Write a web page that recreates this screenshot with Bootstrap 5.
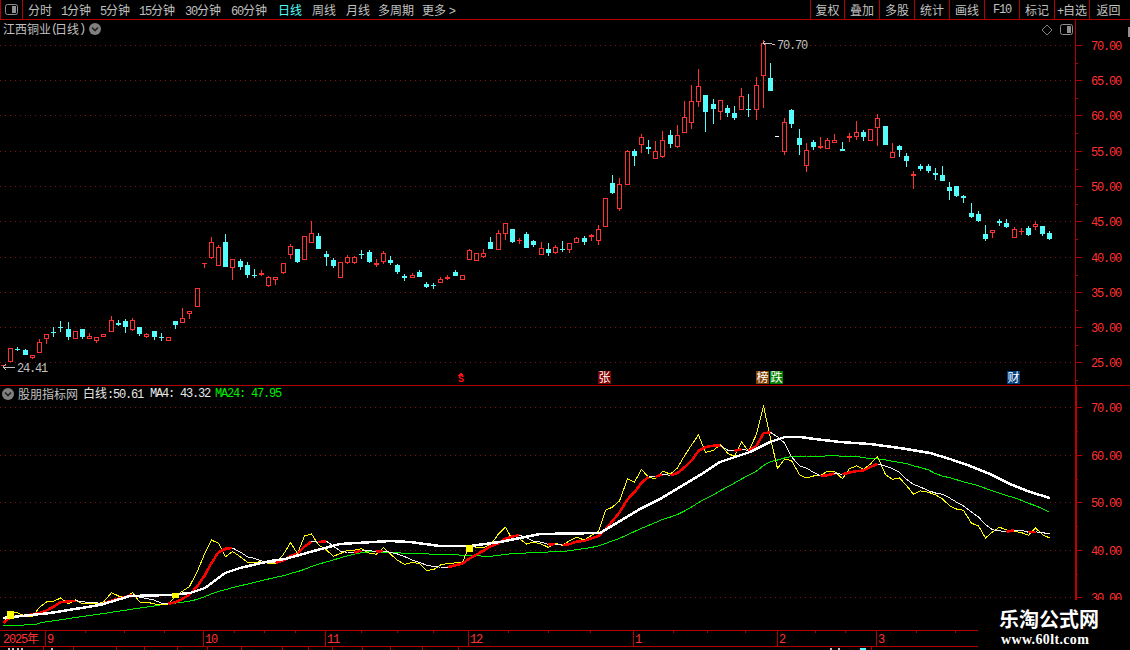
<!doctype html>
<html lang="zh">
<head>
<meta charset="utf-8">
<title>江西铜业(日线)</title>
<link href="https://cdn.jsdelivr.net/npm/bootstrap@5.3.0/dist/css/bootstrap.min.css" rel="stylesheet">
<style>
html,body{background:#000;margin:0;overflow:hidden}
body{font:12px/1 "Noto Sans CJK SC","Liberation Sans",sans-serif;color:#c0c0c0}
.stage{width:1130px;height:650px;background:#000;overflow:hidden}
.topbar{height:20px;border-bottom:1px solid #b40000;border-left:1px solid #b40000;line-height:19px}
.panel-btn{width:22px;border-right:1px solid #b40000}
.tb-left{display:grid;grid-template-columns:33px 39px 39px 46px 46px 47px 34px 34px 32px 44px auto;padding-left:5px}
.tb-on{color:#54fcfc}
.tb-btn{width:35px;border-left:1px solid #b40000;text-align:center}
.tb-btn:first-child{width:34px}
.tb-btn:last-child{width:41px;padding-right:3px}
.tb-f10{padding-top:1px}
.dg{font-family:"Liberation Mono",monospace;letter-spacing:-1.2px}
.pr{font-family:"Liberation Mono",monospace;letter-spacing:-3.2px}
.pane{display:block}
.pane-up{height:365px}
.pane-low{height:245px}
.legend{left:3px;top:3px;height:12px;line-height:12px}
.legend-low{left:2px;top:2px;height:14px;line-height:14px;gap:5px}
.chev{width:12px;height:12px}
.chev-title{margin-left:6px}
.chev-low{margin-right:-1px}
.lg-white{color:#e8e8e8}
.lg-ma4{margin-left:2px}
.lg-green{color:#00f000}
.ax-t{font:12px "Liberation Mono",monospace;letter-spacing:-1.2px;fill:#ff3232}
.lb-t{font:12px "Liberation Mono",monospace;letter-spacing:-1.2px;fill:#c0c0c0}
.mk-t{font:12px "Noto Sans CJK SC",sans-serif;fill:#fff}
.mk-s{font:bold 10px "Liberation Mono",monospace;fill:#ff1010}
.watermark{right:0;bottom:0;width:152px;height:50px;background:#000;color:#fff;padding-left:21px}
.wm-a{font:700 20px/22px "Noto Sans CJK SC",sans-serif;margin-top:8px}
.wm-b{font:bold 14px/14px "Liberation Serif",serif;padding-left:2px;letter-spacing:.35px;margin-top:3px}
</style>
</head>
<body>
<div class="stage d-flex flex-column position-relative">
  <nav class="topbar d-flex justify-content-between flex-shrink-0">
    <div class="d-flex">
      <div class="panel-btn d-flex align-items-center justify-content-center">
        <svg width="13" height="11" viewBox="0 0 13 11"><rect x=".5" y=".5" width="12" height="10" rx="2" fill="none" stroke="#909090"/><rect x="7" y="2" width="4" height="7" fill="#909090"/></svg>
      </div>
      <div class="tb-left">
        <span>分时</span><span><span class="dg">1</span>分钟</span><span><span class="dg">5</span>分钟</span><span><span class="dg">15</span>分钟</span><span><span class="dg">30</span>分钟</span><span><span class="dg">60</span>分钟</span><span class="tb-on">日线</span><span>周线</span><span>月线</span><span>多周期</span><span>更多 <span class="dg">&gt;</span></span>
      </div>
    </div>
    <div class="d-flex">
      <div class="tb-btn">复权</div><div class="tb-btn">叠加</div><div class="tb-btn">多股</div><div class="tb-btn">统计</div><div class="tb-btn">画线</div><div class="tb-btn dg tb-f10">F10</div><div class="tb-btn">标记</div><div class="tb-btn"><span class="dg">+</span>自选</div><div class="tb-btn">返回</div>
    </div>
  </nav>

  <section class="pane-up position-relative flex-shrink-0">
    <svg id="up" class="pane" width="1130" height="365" viewBox="0 20 1130 365" shape-rendering="crispEdges"></svg>
    <div class="legend position-absolute d-flex align-items-center">
      <span>江西铜业</span><span class="pr">(</span><span>日线</span><span class="pr">)</span>
      <svg class="chev chev-title" viewBox="0 0 12 12"><circle cx="6" cy="6" r="6" fill="#808080"/><path d="M3 4.5 6 7.5 9 4.5" fill="none" stroke="#222" stroke-width="1.6"/></svg>
    </div>
  </section>

  <section class="pane-low position-relative flex-shrink-0">
    <svg id="low" class="pane" width="1130" height="245" viewBox="0 385 1130 245" shape-rendering="crispEdges"></svg>
    <div class="legend-low position-absolute d-flex align-items-center">
      <svg class="chev chev-low" viewBox="0 0 12 12"><circle cx="6" cy="6" r="6" fill="#808080"/><path d="M3 4.5 6 7.5 9 4.5" fill="none" stroke="#222" stroke-width="1.6"/></svg>
      <span>股朋指标网</span>
      <span class="lg-white">白线<span class="dg">:50.61</span></span>
      <span class="lg-white dg lg-ma4">MA4: 43.32</span>
      <span class="lg-green dg">MA24: 47.95</span>
    </div>
  </section>

  <svg id="time" class="pane flex-shrink-0" width="1130" height="20" viewBox="0 630 1130 20" shape-rendering="crispEdges"></svg>

  <aside class="watermark position-absolute">
    <div class="wm-a">乐淘公式网</div>
    <div class="wm-b">www.60lt.com</div>
  </aside>
</div>

<script>
const R='#ff3232',K='#54fcfc',AX='#b40000',DOT='#7a1414';
const C=[
[3,'r',365,366],[10,'r',348,362],[17,'c',349,350,347,351],[25,'c',350,355,349,355],[32,'r',355,358,355,359],
[39,'r',342,353,339,353],[46,'r',334,339,334,344],[53,'c',332,333,327,337],[60,'c',327,328,321,332],[68,'c',329,337,322,340],
[75,'r',331,339],[82,'c',329,337,329,339],[89,'r',336,339,333,339],[96,'r',337,341,337,343],[103,'r',334,337],
[111,'r',320,332,316,332],[118,'c',323,325,320,326],[125,'c',321,327,319,333],[132,'r',320,330,318,331],[139,'c',327,334,327,336],
[146,'r',334,337,333,338],[154,'c',331,337,331,340],[161,'c',337,338,333,341],[168,'r',337,341],[175,'c',321,325,321,329],
[182,'r',318,323,308,323],[189,'r',311,314,311,319],[197,'r',288,307],[204,'r',263,264,263,268],[211,'r',242,258,237,259],
[218,'r',247,266,245,266],[225,'c',242,267,234,267],[232,'r',259,268,259,280],[240,'c',261,267,259,270],[247,'c',265,275,262,278],
[254,'c',275,276,269,278],[261,'r',273,275,270,276],[268,'r',277,286,276,287],[275,'r',277,280,277,285],[283,'r',263,273,263,274],
[290,'r',246,255,244,259],[297,'c',249,262,249,263],[304,'r',236,260],[311,'r',233,243,221,243],[318,'c',236,249,233,249],
[326,'c',254,257,251,266],[333,'c',260,266,258,268],[340,'r',262,278],[347,'r',257,263,255,264],[354,'r',257,263,256,264],
[361,'c',254,255,250,259],[369,'c',252,262,250,263],[376,'r',263,265,259,267],[383,'r',253,262,251,264],[390,'c',260,263,256,265],
[397,'c',265,272,264,274],[404,'c',276,278,274,281],[412,'r',275,278,273,278],[419,'c',272,277,270,277],[426,'c',284,287,282,288],
[433,'c',285,286,283,289],[440,'r',279,283,277,283],[447,'r',277,279,275,280],[455,'c',272,276,270,276],[462,'r',275,280],
[469,'r',250,260,249,260],[476,'r',253,261],[483,'r',253,257,249,258],[490,'c',242,249,237,249],[498,'r',233,250,230,250],
[505,'r',223,234,223,240],[512,'c',229,242,229,243],[519,'r',240,241,238,244],[526,'c',234,248,232,248],[533,'c',241,245,240,247],
[541,'r',248,255,242,255],[548,'c',249,253,243,256],[555,'r',247,253,245,254],[562,'c',249,250,241,252],[569,'r',243,250,243,253],
[576,'r',238,243,237,243],[584,'c',238,242,236,245],[591,'r',235,237,234,241],[598,'r',229,241,225,245],[605,'r',198,227],
[612,'c',183,193,175,194],[619,'r',184,209,178,211],[627,'r',151,185,150,185],[634,'c',151,156,149,166],[641,'r',137,145,134,153],
[648,'c',147,149,140,154],[655,'r',151,159,141,159],[662,'r',140,157,131,158],[670,'c',135,144,130,148],[677,'r',135,147,125,148],
[684,'r',117,133,101,133],[691,'r',101,123,85,129],[698,'r',86,102,69,107],[705,'c',95,112,95,132],[713,'c',104,109,99,124],
[720,'r',100,112,100,120],[727,'c',108,113,105,117],[734,'c',113,118,106,120],[741,'r',96,110,88,110],[748,'c',109,110,94,117],
[756,'r',85,110,77,120],[763,'r',43,76,40,108],[770,'c',78,91,63,91],[777,'w',136,137],[784,'r',122,152,118,155],
[791,'c',110,124,109,128],[799,'c',138,145,129,155],[806,'r',150,166,143,172],[813,'c',142,147,140,150],[820,'r',146,148,137,149],
[827,'r',140,149,138,149],[834,'r',140,143,134,143],[842,'c',149,151,142,151],[849,'r',136,138,133,142],[856,'r',132,137,121,140],
[863,'c',132,137,130,141],[870,'r',129,141],[877,'r',118,128,114,146],[885,'c',126,145],[892,'r',152,158,143,158],
[899,'c',146,150,145,157],[906,'c',156,161,153,167],[913,'r',174,176,171,189],[920,'c',166,169,164,171],[928,'c',166,171,164,173],
[935,'c',173,175,168,180],[942,'c',175,181,166,181],[949,'c',187,191,182,200],[956,'c',186,196,186,197],[963,'c',196,198,195,203],
[971,'c',213,217,203,218],[978,'c',214,221,211,222],[985,'c',234,239,225,241],[992,'r',230,233,230,238],[999,'c',221,223,219,226],
[1006,'c',223,227,219,228],[1014,'r',229,238,227,238],[1021,'r',231,232,228,235],[1028,'c',228,235,226,236],[1035,'r',224,227,221,230],
[1042,'c',226,234,226,236],[1049,'c',233,239,231,240]
];
const rect=(x,y,w,h,f)=>`<rect x="${x}" y="${y}" width="${w}" height="${h}" fill="${f}"/>`;
const grid=y=>`<line x1="0" y1="${y+.5}" x2="1075" y2="${y+.5}" stroke="${DOT}" stroke-dasharray="1 4"/>`;
const poly=(pts,col,w)=>`<polyline points="${pts.map(p=>p[0]+','+p[1].toFixed(1)).join(' ')}" fill="none" stroke="${col}" stroke-width="${w}" stroke-linejoin="round"/>`;

/* ---------- upper pane ---------- */
let u='';
const gy=[45,80,115,151,186,221,257,292,327,362],pr=['70.00','65.00','60.00','55.00','50.00','45.00','40.00','35.00','30.00','25.00'];
gy.forEach(y=>u+=grid(y));
u+=rect(1075,20,1,365,AX);
gy.forEach((y,i)=>{u+=rect(1075,y,7,1,AX);u+=rect(1075,y+18,3,1,AX);
  u+=`<text class="ax-t" x="1091" y="${y+5}">${pr[i]}</text>`;});
C.forEach(([x,c,t,b,h,l])=>{
  h=h===undefined?t:h;l=l===undefined?b:l;
  if(c==='w'){u+=rect(x-2,t,4,1,'#fff');return;}
  const col=c==='r'?R:K;
  if(l>h)u+=rect(x,h,1,l-h,col);
  if(c==='c'||b-t<=2){u+=rect(x-2,t,5,Math.max(b-t,1),col);}
  else{u+=rect(x-2,t,5,b-t,col)+rect(x-1,t+1,3,b-t-2,'#000');}
});
/* high / low annotations */
u+=`<path d="M763 43 765 41M763 43 765 45M763 43H769L775 45" fill="none" stroke="#c0c0c0"/><text class="lb-t" x="777" y="49">70.70</text>`;
u+=`<path d="M3 367H15M3 367 6 364M3 367 6 370" fill="none" stroke="#c0c0c0"/><text class="lb-t" x="17" y="372">24.41</text>`;
/* event markers */
u+=`<path d="M461 372.5 458.5 375.5H463.5Z" fill="#ff1010"/><text class="mk-s" x="458" y="382">S</text>`;
[[598,'#800000','张'],[756,'#804000','榜'],[770,'#008000','跌'],[1007,'#004080','财']].forEach(([x,f,s])=>{
  u+=rect(x,371,13,13,f)+`<text class="mk-t" x="${x+.5}" y="382">${s}</text>`;});
/* top-right icons */
u+=`<path d="M1047 25 1052 30 1047 35 1042 30Z" fill="none" stroke="#808080" shape-rendering="auto"/>`;
u+=`<rect x="1060.5" y="24.5" width="12" height="10" rx="2" fill="none" stroke="#909090" shape-rendering="auto"/>`+rect(1067,26,4,7,'#909090');
u+=rect(1128,27,2,10,'#909090');
document.getElementById('up').innerHTML=u;

/* ---------- lower pane ---------- */
const ly=uy=>407.3+(uy-45)*0.6738;
const cl=C.map(d=>[d[0]+.5,d[1]==='c'?d[3]:d[2]]);
const yellow=cl.map(p=>[p[0],ly(p[1])]);
const avg=(i,n)=>{let s=0,c=0;for(let k=Math.max(0,i-n+1);k<=i;k++){s+=cl[k][1];c++;}return s/c;};
const ma4=cl.map((p,i)=>[p[0],ly(avg(i,4))]);
const green=[[3,626],[35,624.5],[43,622.3],[100,614],[167,604]];
cl.forEach((p,i)=>{if(i>=24)green.push([p[0],ly(avg(i,24))]);});
const white=[[3,618],[50,613],[100,605],[130,596],[170,595],[190,593],[205,588],[225,573],[240,568],[270,561],[285,559],[310,552],[340,544],[390,541],[410,542],[440,546],[470,546],[500,542],[540,534],[600,533],[625,518],[640,509],[660,499],[680,487],[700,475],[720,462],[750,452],[770,442],[785,437],[800,437],[815,439],[840,442],[870,444],[900,448],[930,453],[950,459],[970,466],[990,474],[1010,484],[1030,492],[1050,498]];
let d=rect(0,385,1130,1,AX);
const ly2=[407,455,502,550,597],lp=['70.00','60.00','50.00','40.00','30.00'];
ly2.forEach(y=>d+=grid(y));
d+=rect(1075,386,2,244,'#c00000');
ly2.forEach((y,i)=>{d+=rect(1075,y,7,1,AX);if(i<4)d+=rect(1075,y+24,3,1,AX);
  d+=`<text class="ax-t" x="1091" y="${y+5}">${lp[i]}</text>`;});
d+=poly(green,'#00f000',1);
d+=poly(yellow,'#ffff00',1);
for(let i=1;i<ma4.length;i++){
  const rising=ma4[i][1]<ma4[i-1][1];
  d+=poly([ma4[i-1],ma4[i]],rising?'#ff0000':'#f0f0f0',rising?2.5:1);
}
d+=poly(white,'#ffffff',2.5);
d+=rect(7,611,7,8,'#ffff00')+rect(172,593,7,5,'#ffff00')+rect(466,545,7,7,'#ffff00');
document.getElementById('low').innerHTML=d;

/* ---------- time axis ---------- */
let t=rect(0,630,978,1,AX)+rect(0,646,978,1,AX);
[[45,'9'],[203,'10'],[325,'11'],[468,'12'],[633,'1'],[777,'2'],[876,'3']].forEach(([x,s])=>{
  t+=rect(x,630,1,16,AX)+`<text class="ax-t" x="${x+2}" y="643">${s}</text>`;});
[85,124,164,234,264,295,361,397,433,508,548,590,673,707,745,815,845,916,955].forEach(x=>t+=rect(x,630,1,3,AX));
t+=`<text class="ax-t" x="3" y="643">2025</text><text class="ax-t" x="27" y="643" style="font-family:'Noto Sans CJK SC',sans-serif;letter-spacing:0">年</text>`;
[43,73,116,144,177,207,241,282,308,332,362,390,422,458,871].forEach(x=>t+=rect(x,647,1,3,AX));
[8,12,17,21,51,830,838].forEach(x=>t+=rect(x,648,2,2,'#c0c0c0'));
t+=rect(860,648,6,2,K);
document.getElementById('time').innerHTML=t;
</script>
<script src="https://cdn.jsdelivr.net/npm/bootstrap@5.3.0/dist/js/bootstrap.bundle.min.js"></script>
</body>
</html>
